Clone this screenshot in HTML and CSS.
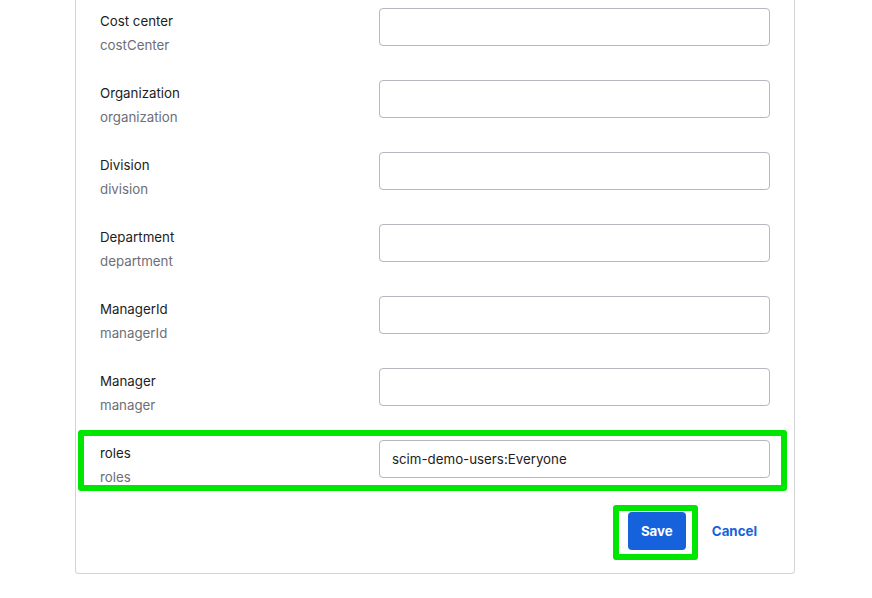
FILE: index.html
```html
<!DOCTYPE html>
<html lang="en">
<head>
    <meta charset="UTF-8">
    <meta name="viewport" content="width=device-width, initial-scale=1.0">
    <title>Edit Attributes</title>
    <link rel="stylesheet" href="styles.css">
</head>
<body>
    <div class="card">
        <form class="attr-form">
            <div class="attr-row">
                <div class="attr-label">
                    <span class="name">Cost center</span>
                    <span class="var">costCenter</span>
                </div>
                <input type="text" class="attr-input">
            </div>

            <div class="attr-row">
                <div class="attr-label">
                    <span class="name">Organization</span>
                    <span class="var">organization</span>
                </div>
                <input type="text" class="attr-input">
            </div>

            <div class="attr-row">
                <div class="attr-label">
                    <span class="name">Division</span>
                    <span class="var">division</span>
                </div>
                <input type="text" class="attr-input">
            </div>

            <div class="attr-row">
                <div class="attr-label">
                    <span class="name">Department</span>
                    <span class="var">department</span>
                </div>
                <input type="text" class="attr-input">
            </div>

            <div class="attr-row">
                <div class="attr-label">
                    <span class="name">ManagerId</span>
                    <span class="var">managerId</span>
                </div>
                <input type="text" class="attr-input">
            </div>

            <div class="attr-row">
                <div class="attr-label">
                    <span class="name">Manager</span>
                    <span class="var">manager</span>
                </div>
                <input type="text" class="attr-input">
            </div>

            <div class="attr-row highlighted">
                <div class="attr-label">
                    <span class="name">roles</span>
                    <span class="var">roles</span>
                </div>
                <input type="text" class="attr-input" value="scim-demo-users:Everyone">
                <div class="highlight-box row-box"></div>
            </div>

            <div class="form-actions">
                <span class="save-wrap">
                    <button type="submit" class="btn-save">Save</button>
                    <span class="highlight-box save-box"></span>
                </span>
                <a href="#" class="btn-cancel">Cancel</a>
            </div>
        </form>
    </div>
</body>
</html>
```

FILE: styles.css
```css
* {
    margin: 0;
    padding: 0;
    box-sizing: border-box;
}

body {
    font-family: 'Inter', 'Liberation Sans', sans-serif;
    background: #fff;
    color: #1d1d21;
    font-size: 13.3px;
}

.card {
    width: 720px;
    margin-left: 75px;
    padding: 8px 24px 23px 24px;
    border: 1px solid #d2d2d7;
    border-top: none;
    border-radius: 0 0 4px 4px;
}

.attr-form {
    display: flex;
    flex-direction: column;
    gap: 24px;
}

.attr-row {
    position: relative;
    display: grid;
    grid-template-columns: 279px 1fr;
    align-items: start;
}

.attr-label {
    display: flex;
    flex-direction: column;
    padding-top: 1px;
    line-height: 24px;
    height: 48px;
}

.attr-label .name {
    color: #1d1d21;
}

.attr-label .var {
    color: #6e6e78;
}

.attr-input {
    height: 38px;
    width: 100%;
    padding: 0 12px;
    border: 1px solid #b7b7bf;
    border-radius: 4px;
    font-family: inherit;
    font-size: 13.3px;
    color: #1d1d21;
    background: #fff;
}

.attr-input:focus {
    outline: none;
    border-color: #1662dd;
}

.highlight-box {
    position: absolute;
    border: 6px solid #00e600;
    border-radius: 3px;
    pointer-events: none;
}

.row-box {
    top: -10px;
    left: -22px;
    right: -17px;
    bottom: -3px;
}

.form-actions {
    display: flex;
    justify-content: flex-end;
    align-items: center;
}

.save-wrap {
    position: relative;
    display: inline-flex;
}

.save-box {
    top: -7px;
    left: -15px;
    right: -12px;
    bottom: -10px;
}

.btn-save {
    height: 38px;
    width: 58px;
    background: #1662dd;
    color: #fff;
    border: none;
    border-radius: 4px;
    font-family: inherit;
    font-size: 13.3px;
    font-weight: 700;
    cursor: pointer;
}

.btn-cancel {
    margin-left: 13px;
    padding: 0 13px;
    line-height: 38px;
    color: #1662dd;
    font-weight: 700;
    text-decoration: none;
}

.btn-cancel:hover {
    text-decoration: underline;
}
```
